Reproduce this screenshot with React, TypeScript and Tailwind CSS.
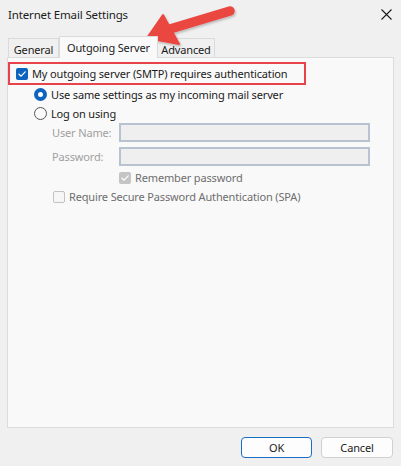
import React from "react";

const font = { fontFamily: '"Noto Sans", "Open Sans", sans-serif', letterSpacing: "-0.15px" };

function Check({ color = "white" }: { color?: string }) {
  return (
    <svg width="10" height="10" viewBox="0 0 10 10">
      <path d="M2 5.2 L4.1 7.2 L8.2 2.8" fill="none" stroke={color} strokeWidth="1.2" strokeLinecap="round" strokeLinejoin="round" />
    </svg>
  );
}

export default function App() {
  return (
    <div className="relative w-[401px] h-[466px] bg-[#f0f0f0] text-[11px] text-[#1b1b1b] overflow-hidden whitespace-nowrap" style={font}>
      {/* title bar */}
      <div className="flex items-center justify-between h-[29px] pl-[8px] pr-[9px]">
        <span className="leading-none text-[11.5px]">Internet Email Settings</span>
        <svg width="11" height="11" viewBox="0 0 11 11">
          <path d="M0.5 0.5 L10.5 10.5 M10.5 0.5 L0.5 10.5" stroke="#1b1b1b" strokeWidth="1.1" />
        </svg>
      </div>

      {/* tabs */}
      <div className="flex items-end h-[28px] pl-[8px]">
        <div className="h-[19px] w-[51px] border border-b-0 border-[#dadada] bg-[#f0f0f0] flex items-center justify-center">
          <span className="leading-none mt-[2px]">General</span>
        </div>
        <div className="relative z-10 h-[22px] w-[99px] border border-b-0 border-[#dadada] bg-[#f9f9f9] flex items-center justify-center -mb-[1px]">
          <span className="leading-none -mt-[1px]">Outgoing Server</span>
        </div>
        <div className="h-[19px] w-[57px] border border-b-0 border-l-0 border-[#dadada] bg-[#f0f0f0] flex items-center justify-center">
          <span className="leading-none mt-[2px]">Advanced</span>
        </div>
      </div>

      {/* panel */}
      <div className="ml-[7px] w-[387px] h-[371px] border border-[#dcdcdc] bg-[#f9f9f9]">
        <div className="mt-[4px] w-[298px] h-[23px] border-2 border-[#e8424a] flex items-center pl-[6px]">
          <div className="w-[12px] h-[12px] rounded-[2px] bg-[#0c64bf] flex items-center justify-center">
            <Check />
          </div>
          <span className="ml-[4px] leading-none">My outgoing server (SMTP) requires authentication</span>
        </div>

        <div className="flex items-center h-[19px] pl-[26px]">
          <div className="w-[13px] h-[13px] rounded-full bg-[#0c64bf] flex items-center justify-center">
            <div className="w-[5px] h-[5px] rounded-full bg-white" />
          </div>
          <span className="ml-[4px] leading-none">Use same settings as my incoming mail server</span>
        </div>

        <div className="flex items-center h-[19px] pl-[26px]">
          <div className="w-[13px] h-[13px] rounded-full border border-[#555] bg-[#fafafa]" />
          <span className="ml-[4px] leading-none">Log on using</span>
        </div>

        <div className="flex items-center pl-[44px]">
          <span className="w-[67px] leading-none text-[#a0a0a0]">User Name:</span>
          <div className="w-[251px] h-[19px] border-2 border-[#b8c2d0] bg-[#efefef]" />
        </div>
        <div className="flex items-center mt-[5px] pl-[44px]">
          <span className="w-[67px] leading-none text-[#a0a0a0]">Password:</span>
          <div className="w-[251px] h-[19px] border-2 border-[#b8c2d0] bg-[#efefef]" />
        </div>

        <div className="flex items-center h-[19px] mt-[2px] pl-[111px]">
          <div className="w-[12px] h-[12px] rounded-[2px] bg-[#c4c4c4] flex items-center justify-center">
            <Check />
          </div>
          <span className="ml-[4px] leading-none text-[#6e6e6e]">Remember password</span>
        </div>

        <div className="flex items-center h-[19px] pl-[45px]">
          <div className="w-[12px] h-[12px] rounded-[2px] border border-[#c2c2c2] bg-[#f6f6f6]" />
          <span className="ml-[4px] leading-none text-[#6e6e6e]">Require Secure Password Authentication (SPA)</span>
        </div>
      </div>

      {/* buttons */}
      <div className="flex justify-end gap-[9px] pr-[8px] mt-[9px]">
        <button className="w-[71px] h-[21px] rounded-[4px] border border-[#1a6fc4] bg-[#fdfdfd] leading-none">OK</button>
        <button className="w-[72px] h-[21px] rounded-[4px] border border-[#d0d0d0] bg-[#fdfdfd] leading-none">Cancel</button>
      </div>

      {/* red arrow overlay */}
      <svg className="absolute left-0 top-0 pointer-events-none" width="401" height="80" viewBox="0 0 401 80">
        <defs>
          <filter id="sh" x="-20%" y="-20%" width="140%" height="140%">
            <feDropShadow dx="1" dy="1.5" stdDeviation="1.2" floodColor="#000" floodOpacity="0.25" />
          </filter>
        </defs>
        <g filter="url(#sh)">
          <line x1="230" y1="11" x2="170" y2="29" stroke="#ea4640" strokeWidth="9.5" strokeLinecap="round" />
          <path d="M147 38 L163 15 L179 44 Z" fill="#ea4640" stroke="#ea4640" strokeWidth="2" strokeLinejoin="round" />
        </g>
      </svg>
    </div>
  );
}
